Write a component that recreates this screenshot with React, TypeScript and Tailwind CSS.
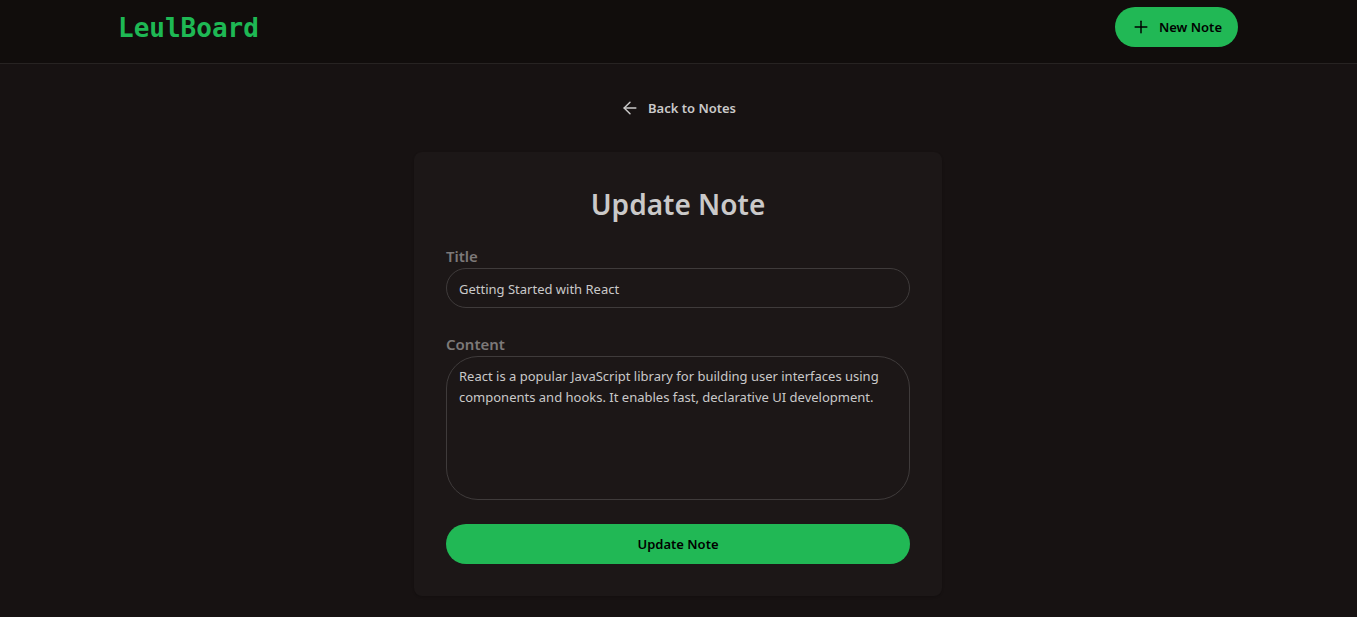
import { useState } from "react";
import { ArrowLeft, Plus } from "lucide-react";

function Navbar() {
  return (
    <header className="border-b border-[#272322] bg-[#110d0c] pr-px">
      <div className="mx-auto flex h-[63px] max-w-6xl items-start justify-between px-4 pt-[7px]">
        <a href="#home" className="font-['DejaVu_Sans_Mono',monospace] text-[26px] leading-[42px] font-bold text-[#1eb854]">
          LeulBoard
        </a>
        <a
          href="#create"
          className="flex h-10 items-center gap-2 rounded-full bg-[#21b855] px-4 text-[13px] font-semibold text-black"
        >
          <Plus className="size-5" strokeWidth={1.75} />
          <span className="pt-0.5">New Note</span>
        </a>
      </div>
    </header>
  );
}

export default function App() {
  const [title, setTitle] = useState("Getting Started with React");
  const [content, setContent] = useState(
    "React is a popular JavaScript library for building user interfaces using components and hooks. It enables fast, declarative UI development.",
  );

  return (
    <div className="min-h-screen bg-[#171212] font-['Noto_Sans',sans-serif] text-[#cac9c9]">
      <Navbar />
      <main className="flex flex-col items-center pt-6 pr-px">
        <a href="#notes" className="mb-6 flex h-10 items-center gap-2 px-4 text-[13px] font-semibold">
          <ArrowLeft className="size-5" strokeWidth={1.75} />
          <span className="pt-0.5">Back to Notes</span>
        </a>
        <form
          className="w-full max-w-[528px] rounded-lg bg-[#1c1717] p-8 shadow-sm"
          onSubmit={(e) => e.preventDefault()}
        >
          <h1 className="mb-5 text-center text-[28px] leading-10 font-semibold">Update Note</h1>
          <div className="mb-6 flex flex-col">
            <label htmlFor="title" className="text-[15px] leading-6 font-semibold text-[#7c7979]">
              Title
            </label>
            <input
              id="title"
              value={title}
              onChange={(e) => setTitle(e.target.value)}
              className="h-10 rounded-full border border-[#3f3b3b] bg-transparent px-3 pt-0.5 text-[13px] outline-none"
            />
          </div>
          <div className="mb-6 flex flex-col">
            <label htmlFor="content" className="text-[15px] leading-6 font-semibold text-[#7c7979]">
              Content
            </label>
            <textarea
              id="content"
              value={content}
              onChange={(e) => setContent(e.target.value)}
              className="h-36 resize-none rounded-[32px] border border-[#3f3b3b] bg-transparent px-3 py-[9px] text-[13px] leading-[21px] outline-none"
            />
          </div>
          <button type="submit" className="h-10 w-full rounded-full bg-[#21b855] pt-0.5 text-[13px] font-semibold text-black">
            Update Note
          </button>
        </form>
      </main>
    </div>
  );
}
